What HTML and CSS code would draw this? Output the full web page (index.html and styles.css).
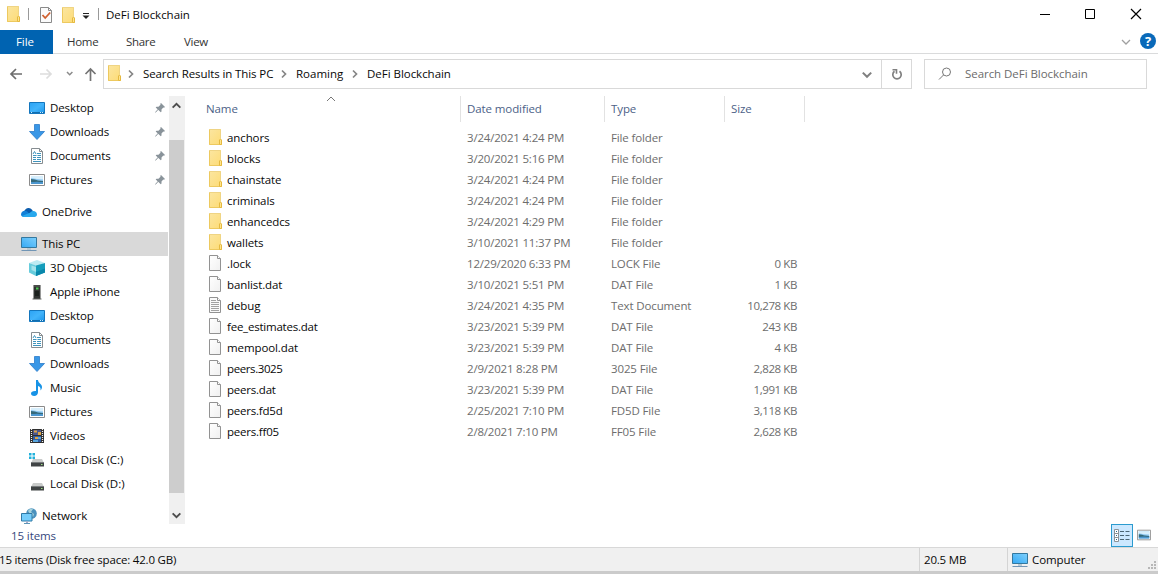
FILE: index.html
```
<!DOCTYPE html>
<html lang="en">
<head>
<meta charset="utf-8">
<title>DeFi Blockchain</title>
<link rel="stylesheet" href="styles.css">
</head>
<body>
<svg class="defs" aria-hidden="true">
  <defs>
    <linearGradient id="gFolder" x1="0" y1="0" x2="1" y2="1"><stop offset="0" stop-color="#fbe6a2"/><stop offset="1" stop-color="#fddb74"/></linearGradient>
    <linearGradient id="gBlue" x1="0" y1="0" x2="1" y2="1"><stop offset="0" stop-color="#2ba3f5"/><stop offset=".5" stop-color="#42b4fb"/><stop offset="1" stop-color="#1c95ea"/></linearGradient>
    <linearGradient id="gPc" x1="0" y1="1" x2="1" y2="0"><stop offset="0" stop-color="#35a9f4"/><stop offset="1" stop-color="#7fd0fc"/></linearGradient>
    <linearGradient id="gPage" x1="0" y1="0" x2="1" y2="1"><stop offset="0" stop-color="#fff"/><stop offset="1" stop-color="#f0f0f0"/></linearGradient>
    <symbol id="folder" viewBox="0 0 16 16"><path d="M2 0h12v11h1v5H2z" fill="url(#gFolder)"/><path d="M2.500 0v15.500H12.500" fill="none" stroke="#edc95f"/><path d="M2 .5h11.500v10.500" fill="none" stroke="#efd484"/><path d="M12.500 15.500v-4.500l1-1 1 1v4.500z" fill="#ffe58c" stroke="#e5b940"/></symbol>
    <symbol id="page" viewBox="0 0 16 16"><path d="M2.500.5h8l3 3v12h-11z" fill="url(#gPage)" stroke="#929292"/><path d="M10.500.5v3h3" fill="#fff" stroke="#929292"/></symbol>
    <symbol id="text" viewBox="0 0 16 16"><path d="M2.500.5h8l3 3v12h-11z" fill="#fafafa" stroke="#929292"/><path d="M10.500.5v3h3" fill="#fff" stroke="#929292"/><path d="M4 3.500h5M4 5.500h8M4 7.500h8M4 9.500h8M4 11.500h8M4 13.500h8" stroke="#a2a2a2"/></symbol>
    <symbol id="desktop" viewBox="0 0 16 16"><path d="M.5 2.500h15v11H.5z" fill="url(#gBlue)" stroke="#1476bd"/><path d="M1 12.500h14" stroke="#116dae"/><path d="M2 12.500h1m8 0h1m1 0h1" stroke="#c8ebff"/></symbol>
    <symbol id="down" viewBox="0 0 16 16"><path d="M5.500.5h5v7h5L8 15.500.5 7.500h5z" fill="#3997e6" stroke="#2b7bca" stroke-width=".8"/></symbol>
    <symbol id="doc" viewBox="0 0 16 16"><path d="M2.500.5h8l3 3v12h-11z" fill="#fff" stroke="#868d91"/><path d="M10.500.5v3h3" fill="none" stroke="#868d91"/><path d="M4 6l1.500-2.500L7 6M4 7.500h3.500M4 9.500h3M4 11.500h3M4 13.500h8M8 5.500h4M8.500 7.500h3.500M8 9.500h4M8 11.500h4" fill="none" stroke="#3f94bd"/></symbol>
    <symbol id="picture" viewBox="0 0 16 16"><path d="M.5 2.500h15v11H.5z" fill="#fff" stroke="#8b8b8b"/><path d="M2 4h12v8H2z" fill="#8ec8f2"/><path d="M2 4h12v3.500L8 7 2 6z" fill="#d8effc"/><path d="M2 7c3 0 5 1 7 1.500l5 .5v1.500H2z" fill="#35697a"/><path d="M2 10.300l6-.6 6 .5V12H2z" fill="#4b96cf"/></symbol>
    <symbol id="cloud" viewBox="0 0 16 16"><path d="M3 8.200C3.500 4.500 9 1.500 12 7.300L10 12H4z" fill="#0b5cad"/><path d="M0 10.500C0 7 4 5.600 6.200 7.500L11 13H3.200C1.200 13 0 12 0 10.500" fill="#1280d8"/><path d="M9 8.800c2.500-3.300 7-1.300 7 1.800 0 1.500-1.100 2.400-2.500 2.400H3.500c-1 0-2-.4-2.600-1z" fill="#28a8ed"/></symbol>
    <symbol id="pc" viewBox="0 0 16 16"><path d="M.5 1.500h15v10H.5z" fill="url(#gPc)" stroke="#34789f"/><path d="M6 12h4v2H6z" fill="#b9c9d2"/><path d="M.5 14.500h15" stroke="#7195b5"/></symbol>
    <symbol id="cube" viewBox="0 0 16 16"><path d="M0 3l8-3 8 3-8 3z" fill="#bdebf2"/><path d="M0 3l7 2.500V16L0 12.500z" fill="#67ccdc"/><path d="M7 5.500L16 3v9.500L7 16z" fill="#159dbb"/><path d="M2.500 5.500L7 7v5l-4.500-2z" fill="#a4e3eb"/><path d="M7 12l9-3.500v4L7 16z" fill="#0987ab"/></symbol>
    <symbol id="phone" viewBox="0 0 16 16"><path d="M4.500 1h7v14h-7z" fill="#303331"/><path d="M5 2h6" stroke="#626662"/><path d="M7 3.500h2.500v2H7z" fill="#4acb52"/><path d="M3.500 15h9" stroke="#606560"/><path d="M6 7h4v5H6z" fill="#1c211d"/></symbol>
    <symbol id="music" viewBox="0 0 16 16"><path d="M7 0h2c0 3 4 4 4 7 0 1.500-.7 2.500-1.500 3.500.4-3-.8-4-2.500-4.500v6.300C9 14.500 7.300 16 5.200 16S2 15 2 13.500 3.800 10.700 7 11z" fill="#1793e6"/></symbol>
    <symbol id="video" viewBox="0 0 16 16"><path d="M1 1h14v14H1z" fill="#303030"/><path d="M2.500 1v14M13.500 1v14" stroke="#f1f1f1" stroke-width="1.200" stroke-dasharray="1 1"/><path d="M4 2h8v5H4z" fill="#4b578e"/><path d="M4 8h8v6H4z" fill="#315ea6"/><path d="M5 2.500h3v2H5zM9 4h3v3H9zM6 9h3v2H6z" fill="#dfa447"/><path d="M4 12h5v2H4zM9 9h3v2H9z" fill="#58a6dd"/></symbol>
    <symbol id="disk" viewBox="0 0 16 16"><path d="M4 7h9l2 4H2z" fill="#c9cbca"/><path d="M2 10.500h13v4H2z" fill="#404445"/><path d="M2 10.500h13" stroke="#777b7c"/><path d="M12 12.500h1.500" stroke="#9ee084"/></symbol>
    <symbol id="winmark" viewBox="0 0 16 16"><path d="M0 1h2.500v2.500H0zm3.500 0H6v2.500H3.500zM0 4.500h2.500V7H0zm3.500 0H6V7H3.500z" fill="#20b1dc"/></symbol>
    <symbol id="network" viewBox="0 0 16 16"><circle cx="10.500" cy="5.500" r="5.300" fill="#4b91bd"/><path d="M7 3c2-3 4-2 5-2l-2 3 3 2-1 3-3-3z" fill="#a7d3dd"/><path d="M.5 5.500h10.500v7.500H.5z" fill="#75cdfb" stroke="#317aa6"/><path d="M5 13.500h2V15H5z" fill="#aac"/><path d="M3 15.500h6" stroke="#5d96b7"/></symbol>
    <symbol id="pin" viewBox="0 0 10 10"><path d="M6 0l4 4-1 .7-.7-.2L6.500 6.500v2l-.7.800L.7 4.500l.8-.8h2l2-1.900L5.300.8z" fill="#89939a"/><path d="M3.500 6L.3 9.500" stroke="#89939a"/></symbol>
    <symbol id="chev" viewBox="0 0 10 10"><path d="M1.500 3L5 6.500 8.500 3" fill="none" stroke="currentColor" stroke-width="1.700"/></symbol>
  </defs>
</svg>
<div class="window">
  <header class="titlebar">
    <svg class="ico"><use href="#folder"/></svg><i class="tick"></i>
    <svg class="ico check" viewBox="0 0 16 16"><path d="M2.500.5h8l3 3v12h-11z" fill="#fbfbfb" stroke="#8a8a8a"/><path d="M10.500.5v3h3" fill="none" stroke="#8a8a8a"/><path d="M4.500 8l2.700 3 5-5.500" fill="none" stroke="#d0602f" stroke-width="1.800"/></svg>
    <svg class="ico second"><use href="#folder"/></svg>
    <svg class="drop" viewBox="0 0 8 6"><path d="M1 .5h6" stroke="#222"/><path d="M.5 2.500h7L4 6z" fill="#222"/></svg>
    <i class="tick late"></i><span class="title">DeFi Blockchain</span>
    <svg class="controls" viewBox="0 0 104 12"><path d="M0 6.500h10" stroke="#000"/><path d="M45.500 1.500h9v9h-9z" fill="none" stroke="#000"/><path d="M91 1l10 10M101 1L91 11" stroke="#000" stroke-width="1.200"/></svg>
  </header>
  <nav class="ribbon">
    <span class="file">File</span><span class="tab home">Home</span><span class="tab share">Share</span><span class="tab">View</span>
    <svg class="collapse" viewBox="0 0 10 10"><path d="M1 3l4 4 4-4" fill="none" stroke="#a0a0a0" stroke-width="1.300"/></svg>
    <span class="help">?</span>
  </nav>
  <div class="address">
    <svg class="arrows" viewBox="0 0 88 14"><g fill="none" stroke-width="1.700"><path d="M13 7H2M7 2L2 7l5 5" stroke="#6d6d6d"/><path d="M31 7h11M37.500 2.500L42 7l-4.500 4.500" stroke="#ddd"/><path d="M58 5l2.700 2.700L63.400 5" stroke="#8a8a8a" stroke-width="1.500"/><path d="M81.500 14V2M76.500 7l5-5 5 5" stroke="#747474"/></g></svg>
    <div class="pathbox">
      <svg class="ico"><use href="#folder"/></svg>
      <svg class="sep first"><use href="#chev"/></svg><span class="crumb c1">Search Results in This PC</span>
      <svg class="sep"><use href="#chev"/></svg><span class="crumb c2">Roaming</span>
      <svg class="sep"><use href="#chev"/></svg><span class="crumb c3">DeFi Blockchain</span>
      <svg class="pathdrop"><use href="#chev"/></svg>
      <span class="refresh"><svg viewBox="0 0 12 12"><path d="M3.500 3.300A4.200 4.200 0 1 0 8.500 3.300" fill="none" stroke="#808080" stroke-width="1.700"/><path d="M1.500 1.700h4v4" fill="none" stroke="#808080" stroke-width="1.600"/></svg></span>
    </div>
    <div class="search"><svg viewBox="0 0 14 14"><circle cx="8.500" cy="5" r="4" fill="none" stroke="#777"/><path d="M5.500 8L1 12.500" stroke="#777"/></svg><span>Search DeFi Blockchain</span></div>
  </div>
  <main class="main">
    <aside class="tree">
      <div class="node sub"><svg class="ico"><use href="#desktop"/></svg><span>Desktop</span><svg class="pin"><use href="#pin"/></svg></div>
      <div class="node sub"><svg class="ico"><use href="#down"/></svg><span>Downloads</span><svg class="pin"><use href="#pin"/></svg></div>
      <div class="node sub"><svg class="ico"><use href="#doc"/></svg><span>Documents</span><svg class="pin"><use href="#pin"/></svg></div>
      <div class="node sub"><svg class="ico"><use href="#picture"/></svg><span>Pictures</span><svg class="pin"><use href="#pin"/></svg></div>
      <div class="node root"><svg class="ico"><use href="#cloud"/></svg><span>OneDrive</span></div>
      <div class="node root active"><svg class="ico"><use href="#pc"/></svg><span>This PC</span></div>
      <div class="node sub"><svg class="ico"><use href="#cube"/></svg><span>3D Objects</span></div>
      <div class="node sub"><svg class="ico"><use href="#phone"/></svg><span>Apple iPhone</span></div>
      <div class="node sub"><svg class="ico"><use href="#desktop"/></svg><span>Desktop</span></div>
      <div class="node sub"><svg class="ico"><use href="#doc"/></svg><span>Documents</span></div>
      <div class="node sub"><svg class="ico"><use href="#down"/></svg><span>Downloads</span></div>
      <div class="node sub"><svg class="ico"><use href="#music"/></svg><span>Music</span></div>
      <div class="node sub"><svg class="ico"><use href="#picture"/></svg><span>Pictures</span></div>
      <div class="node sub"><svg class="ico"><use href="#video"/></svg><span>Videos</span></div>
      <div class="node sub drive"><svg class="ico"><use href="#disk"/><use href="#winmark"/></svg><span>Local Disk (C:)</span></div>
      <div class="node sub drive"><svg class="ico"><use href="#disk"/></svg><span>Local Disk (D:)</span></div>
      <div class="node root"><svg class="ico"><use href="#network"/></svg><span>Network</span></div>
    </aside>
    <div class="scroll"><svg class="up"><use href="#chev"/></svg><div class="thumb"></div><svg><use href="#chev"/></svg></div>
    <section class="files">
      <div class="head"><span>Name<svg class="sort" viewBox="0 0 10 6"><path d="M1 5l4-4 4 4" fill="none" stroke="#777"/></svg></span><span>Date modified</span><span>Type</span><span>Size</span></div>
      <div class="row"><svg class="ico"><use href="#folder"/></svg><b>anchors</b><span>3/24/2021 4:24 PM</span><span>File folder</span><span></span></div>
      <div class="row"><svg class="ico"><use href="#folder"/></svg><b>blocks</b><span>3/20/2021 5:16 PM</span><span>File folder</span><span></span></div>
      <div class="row"><svg class="ico"><use href="#folder"/></svg><b>chainstate</b><span>3/24/2021 4:24 PM</span><span>File folder</span><span></span></div>
      <div class="row"><svg class="ico"><use href="#folder"/></svg><b>criminals</b><span>3/24/2021 4:24 PM</span><span>File folder</span><span></span></div>
      <div class="row"><svg class="ico"><use href="#folder"/></svg><b>enhancedcs</b><span>3/24/2021 4:29 PM</span><span>File folder</span><span></span></div>
      <div class="row"><svg class="ico"><use href="#folder"/></svg><b>wallets</b><span>3/10/2021 11:37 PM</span><span>File folder</span><span></span></div>
      <div class="row"><svg class="ico"><use href="#page"/></svg><b>.lock</b><span>12/29/2020 6:33 PM</span><span>LOCK File</span><span>0 KB</span></div>
      <div class="row"><svg class="ico"><use href="#page"/></svg><b>banlist.dat</b><span>3/10/2021 5:51 PM</span><span>DAT File</span><span>1 KB</span></div>
      <div class="row"><svg class="ico"><use href="#text"/></svg><b>debug</b><span>3/24/2021 4:35 PM</span><span>Text Document</span><span>10,278 KB</span></div>
      <div class="row"><svg class="ico"><use href="#page"/></svg><b class="tight">fee_estimates.dat</b><span>3/23/2021 5:39 PM</span><span>DAT File</span><span>243 KB</span></div>
      <div class="row"><svg class="ico"><use href="#page"/></svg><b>mempool.dat</b><span>3/23/2021 5:39 PM</span><span>DAT File</span><span>4 KB</span></div>
      <div class="row"><svg class="ico"><use href="#page"/></svg><b class="tighter">peers.3025</b><span>2/9/2021 8:28 PM</span><span>3025 File</span><span>2,828 KB</span></div>
      <div class="row"><svg class="ico"><use href="#page"/></svg><b class="tight">peers.dat</b><span>3/23/2021 5:39 PM</span><span>DAT File</span><span>1,991 KB</span></div>
      <div class="row"><svg class="ico"><use href="#page"/></svg><b class="tight">peers.fd5d</b><span>2/25/2021 7:10 PM</span><span>FD5D File</span><span>3,118 KB</span></div>
      <div class="row"><svg class="ico"><use href="#page"/></svg><b class="tight">peers.ff05</b><span>2/8/2021 7:10 PM</span><span>FF05 File</span><span>2,628 KB</span></div>
    </section>
  </main>
  <div class="count"><span>15 items</span>
    <div class="views"><span class="details"><svg viewBox="0 0 16 14"><path d="M.5.5h4v12h-4zM.5 4.500h4M.5 8.500h4" fill="#fff" stroke="#8b9297"/><path d="M2 2.500h1M2 6.500h1M2 10.500h1" stroke="#268"/><path d="M6 2.500h4m1.500 0h4M6 6.500h4m1.500 0h4M6 10.500h4m1.500 0h4" stroke="#4c6574"/></svg></span><svg class="large"><use href="#picture"/></svg></div>
  </div>
  <footer class="status"><span class="summary">15 items (Disk free space: 42.0 GB)</span><span class="size">20.5 MB</span><span class="computer"><svg class="ico"><use href="#pc"/></svg><em>Computer</em></span><svg class="grip" viewBox="0 0 9 9"><path d="M6 0h2v2H6zM3 3h2v2H3zM6 3h2v2H6zM0 6h2v2H0zM3 6h2v2H3zM6 6h2v2H6z" fill="#b7b7b7"/></svg></footer>
</div>
</body>
</html>
```
FILE: styles.css
```
* { box-sizing: border-box; }
body { margin: 0; background: #fff; color: #080808; font: 11.5px/16px "Open Sans", "Noto Sans", sans-serif; letter-spacing: -.1px; overflow: hidden; white-space: nowrap; }
svg { display: block; flex: none; }
.defs { position: absolute; width: 0; height: 0; }
.window { width: 1158px; height: 574px; display: flex; flex-direction: column; background: #fff; }
.ico { width: 16px; height: 16px; }
.titlebar { height: 30px; display: flex; align-items: center; padding-left: 5px; }
.titlebar .ico { margin-top: -2px; }
.titlebar .check { margin: 0 0 0 9px; }
.tick { width: 1px; height: 12px; background: #999; margin: -2px 0 0 7px; }
.titlebar .second { margin: 0 0 0 6px; }
.drop { width: 8px; height: 6px; margin: 2px 0 0 6px; }
.late { margin-left: 8px; }
.title { margin-left: 7px; letter-spacing: -.03px; }
.controls { width: 104px; height: 12px; margin: -2px 14px 0 auto; }
.ribbon { height: 24px; display: flex; align-items: center; border-bottom: 1px solid #dadbdc; color: #333; }
.file { width: 53px; height: 24px; line-height: 24px; padding-left: 16px; background: #0063b1; color: #fff; }
.tab { margin-left: 14px; letter-spacing: -.3px; }
.home { width: 45px; }
.share { width: 44px; }
.collapse { width: 10px; height: 10px; margin: 0 9px 0 auto; }
.help { width: 16px; height: 16px; border-radius: 8px; background: #0969b9; color: #fff; font-weight: 700; font-size: 13px; line-height: 16px; text-align: center; margin: -2px 2px 0 0; }
.address { height: 42px; display: flex; padding: 5px 11px 0 0; }
.arrows { width: 88px; height: 14px; margin: 8px 0 0 9px; }
.pathbox { width: 809px; height: 30px; border: 1px solid #d9d9d9; margin-left: 6px; display: flex; align-items: center; padding-left: 2px; }
.pathbox > .ico { margin-top: -2px; }
.sep { width: 10px; height: 10px; transform: rotate(-90deg); color: #858585; }
.first { margin: 0 7px 0 4px; }
.c1 { width: 136px; }
.c2 { width: 54px; letter-spacing: 0; }
.c2, .c3 { margin-left: 7px; }
.c3 { letter-spacing: -.03px; }
.pathdrop { width: 12px; height: 12px; color: #808080; margin: 2px 8px 0 auto; }
.refresh { width: 30px; height: 28px; border-left: 1px solid #d9d9d9; display: flex; align-items: center; justify-content: center; }
.refresh svg { width: 12px; height: 12px; }
.search { width: 223px; height: 30px; border: 1px solid #d9d9d9; margin-left: 12px; display: flex; align-items: center; padding-left: 13px; color: #6b6b6b; letter-spacing: -.05px; }
.search svg { width: 14px; height: 14px; margin-right: 13px; }
.main { height: 428px; display: flex; }
.tree { width: 169px; }
.node { height: 24px; display: flex; align-items: center; width: 168px; }
.sub { padding-left: 29px; }
.root { padding-left: 21px; margin-top: 8px; }
.node span { margin-left: 5px; }
.drive { letter-spacing: 0; }
.active { background: #d9d9d9; }
.pin { width: 10px; height: 10px; margin: 0 3px 0 auto; }
.scroll { width: 16px; background: #f0f0f0; display: flex; flex-direction: column; align-items: flex-start; color: #4d4d4d; }
.scroll svg { width: 11px; height: 11px; margin: 17px 0 0 2px; }
.scroll .up { transform: rotate(180deg); margin: 4px 0 29px 2px; }
.thumb { width: 15px; height: 353px; background: #cdcdcd; }
.files { width: 620px; margin-left: 21px; }
.head { height: 26px; margin-bottom: 5px; display: grid; grid-template-columns: 255px 144px 120px 80px; color: #4c5f87; line-height: 26px; }
.head span { border-right: 1px solid #e2e2e2; padding-left: 6px; }
.head span:first-child { padding-left: 0; position: relative; }
.sort { width: 10px; height: 6px; position: absolute; left: 120px; top: 0; }
.row { height: 21px; display: grid; grid-template-columns: 21px 240px 144px 110px 76px; align-items: center; color: #6d6d6d; letter-spacing: -.2px; }
.row .ico { margin: -2px 0 0 1px; }
.row b { font-weight: 400; color: #080808; letter-spacing: -.1px; }
.row .tight { letter-spacing: -.22px; }
.row .tighter { letter-spacing: -.4px; }
.row span:nth-of-type(2) { letter-spacing: -.13px; }
.row span:last-child { text-align: right; letter-spacing: -.4px; }
.count { height: 23px; display: flex; justify-content: space-between; padding-left: 11px; color: #35477d; line-height: 24px; }
.views { display: flex; align-items: center; margin-right: 7px; }
.details { width: 22px; height: 23px; border: 1px solid #2b9bcf; background: #cce8ff; display: flex; align-items: center; justify-content: center; }
.details svg { width: 16px; height: 14px; }
.large { width: 14px; height: 14px; margin: -2px 0 0 4px; }
.status { height: 27px; background: #f0f0f0; border-top: 1px solid #d8d8d8; border-bottom: 3px solid #cbcbcb; display: flex; line-height: 23px; }
.summary { width: 919px; letter-spacing: -.2px; text-indent: -1px; }
.size { width: 88px; border-left: 1px solid #d4d4d4; padding-left: 4px; letter-spacing: -.2px; }
.computer { width: 141px; border-left: 1px solid #d4d4d4; padding-left: 4px; display: flex; align-items: center; }
.computer em { font-style: normal; margin-left: 4px; }
.grip { width: 9px; height: 9px; margin-top: 13px; }
```
